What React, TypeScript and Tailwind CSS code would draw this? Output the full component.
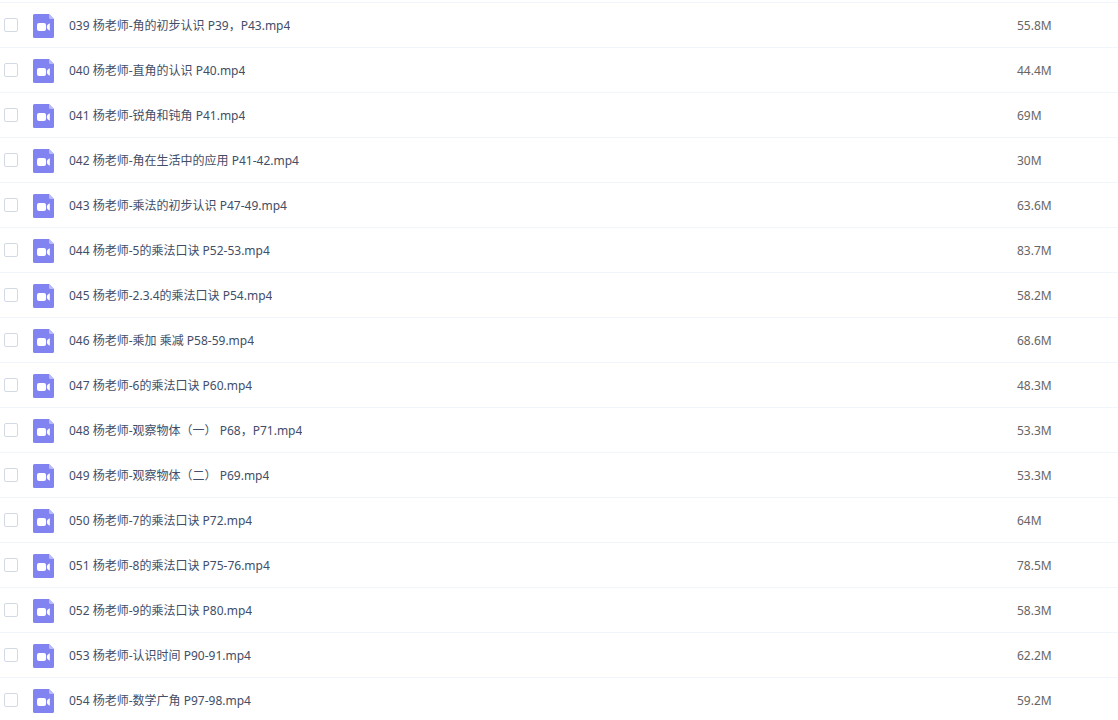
type VideoFile = { name: string; size: string };

const files: VideoFile[] = [
  { name: "039 杨老师-角的初步认识 P39，P43.mp4", size: "55.8M" },
  { name: "040 杨老师-直角的认识 P40.mp4", size: "44.4M" },
  { name: "041 杨老师-锐角和钝角 P41.mp4", size: "69M" },
  { name: "042 杨老师-角在生活中的应用 P41-42.mp4", size: "30M" },
  { name: "043 杨老师-乘法的初步认识 P47-49.mp4", size: "63.6M" },
  { name: "044 杨老师-5的乘法口诀 P52-53.mp4", size: "83.7M" },
  { name: "045 杨老师-2.3.4的乘法口诀 P54.mp4", size: "58.2M" },
  { name: "046 杨老师-乘加 乘减 P58-59.mp4", size: "68.6M" },
  { name: "047 杨老师-6的乘法口诀 P60.mp4", size: "48.3M" },
  { name: "048 杨老师-观察物体（一） P68，P71.mp4", size: "53.3M" },
  { name: "049 杨老师-观察物体（二） P69.mp4", size: "53.3M" },
  { name: "050 杨老师-7的乘法口诀 P72.mp4", size: "64M" },
  { name: "051 杨老师-8的乘法口诀 P75-76.mp4", size: "78.5M" },
  { name: "052 杨老师-9的乘法口诀 P80.mp4", size: "58.3M" },
  { name: "053 杨老师-认识时间 P90-91.mp4", size: "62.2M" },
  { name: "054 杨老师-数学广角 P97-98.mp4", size: "59.2M" },
];

function VideoIcon() {
  return (
    <svg className="block h-6 w-[21px] shrink-0" viewBox="0 0 21 24" aria-hidden="true">
      <path d="M1.5 0H16L21 5V22.5A1.5 1.5 0 0 1 19.5 24H1.5A1.5 1.5 0 0 1 0 22.5V1.5A1.5 1.5 0 0 1 1.5 0Z" fill="#8183f1" />
      <path d="M16 0L21 5H17.500A1.500 1.500 0 0 1 16 3.500Z" fill="#b9baf8" />
      <rect x="4" y="9" width="9" height="8" rx="2" fill="#fff" />
      <path d="M16.800 9.200V16.800C15 16 13.800 14.700 13.800 13S15 10 16.800 9.200Z" fill="#fff" />
    </svg>
  );
}

function FileRow({ file, id }: { file: VideoFile; id: string }) {
  return (
    <tr className="h-[45px]">
      <td className="border-b border-[#f1f5fc] p-0 pl-1">
        <input
          id={id}
          type="checkbox"
          className="block size-3.5 appearance-none rounded-xs border border-[#d4dae4] bg-white checked:bg-[#8183f1]"
        />
      </td>
      <td className="border-b border-[#f1f5fc] p-0 pt-0.5">
        <label htmlFor={id} className="flex items-center gap-[15px] text-[#424e67]">
          <VideoIcon />
          <span className="truncate">{file.name}</span>
        </label>
      </td>
      <td className="border-b border-[#f1f5fc] p-0 pt-0.5 text-[#666666]">{file.size}</td>
    </tr>
  );
}

export default function App() {
  return (
    <main
      lang="zh-CN"
      className="h-screen overflow-hidden bg-white pt-0.5 font-['Noto_Sans','Noto_Sans_CJK_SC',sans-serif] text-xs"
    >
      <table className="w-full table-fixed border-separate border-spacing-0 border-t border-[#f1f5fc]">
        <colgroup>
          <col className="w-[33px]" />
          <col />
          <col className="w-[101px]" />
        </colgroup>
        <tbody>
          {files.map((file, index) => (
            <FileRow key={file.name} file={file} id={`file-${index}`} />
          ))}
        </tbody>
      </table>
    </main>
  );
}
